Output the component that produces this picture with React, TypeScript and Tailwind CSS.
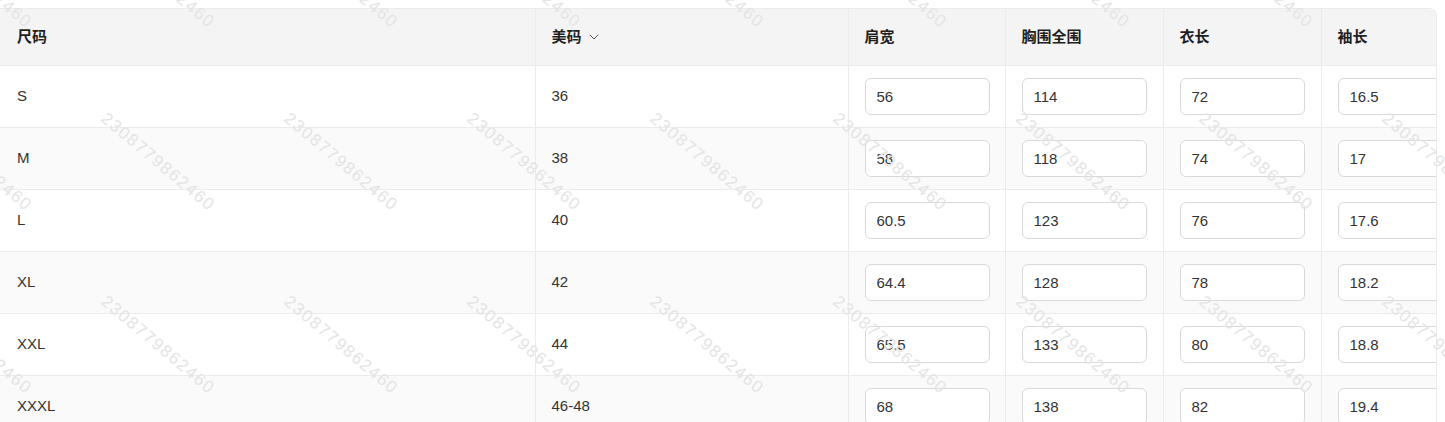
import { ChevronDown } from "lucide-react";

interface SizeRow {
  size: string;
  us: string;
  shoulder: string;
  chest: string;
  length: string;
  sleeve: string;
}

const rows: SizeRow[] = [
  { size: "S", us: "36", shoulder: "56", chest: "114", length: "72", sleeve: "16.5" },
  { size: "M", us: "38", shoulder: "58", chest: "118", length: "74", sleeve: "17" },
  { size: "L", us: "40", shoulder: "60.5", chest: "123", length: "76", sleeve: "17.6" },
  { size: "XL", us: "42", shoulder: "64.4", chest: "128", length: "78", sleeve: "18.2" },
  { size: "XXL", us: "44", shoulder: "65.5", chest: "133", length: "80", sleeve: "18.8" },
  { size: "XXXL", us: "46-48", shoulder: "68", chest: "138", length: "82", sleeve: "19.4" },
];

const WATERMARK = "2308779862460";

function Watermarks() {
  // 水印平铺
  const marks: { x: number; y: number }[] = [];
  for (let j = 0; j < 3; j++) {
    for (let i = 0; i < 9; i++) {
      marks.push({ x: -25 + 183 * i, y: -21 + 183 * j });
    }
  }
  return (
    <div className="pointer-events-none absolute inset-0 z-10 overflow-hidden">
      {marks.map((m, idx) => (
        <span
          key={idx}
          className="absolute -translate-x-1/2 -translate-y-1/2 rotate-[40deg] whitespace-nowrap text-[17px] tracking-[1.5px] text-[#e4e4e4]"
          style={{ left: m.x, top: m.y }}
        >
          {WATERMARK}
        </span>
      ))}
    </div>
  );
}

function ValueInput({ value }: { value: string }) {
  return (
    <input
      readOnly
      value={value}
      className="h-[37px] w-[125px] rounded-md border border-[#d9d9d9] bg-white pl-[11px] text-[15px] text-[#333] outline-none"
    />
  );
}

export default function App() {
  return (
    <div className="relative h-[422px] w-[1445px] overflow-hidden bg-white font-['Liberation_Sans','Noto_Sans_CJK_SC',sans-serif]">
      <div className="mt-2 mr-2 overflow-hidden rounded-tr-lg border-t border-r border-[#ebebeb]">
        <table className="w-[1479px] table-fixed border-collapse text-left text-[15px] text-[#333]">
          <colgroup>
            <col className="w-[535px]" />
            <col className="w-[313px]" />
            <col className="w-[157px]" />
            <col className="w-[158px]" />
            <col className="w-[158px]" />
            <col className="w-[158px]" />
          </colgroup>
          <thead>
            <tr className="h-[56px] bg-[#f4f4f4] text-[#1f1f1f]">
              <th className="border-b border-[#ebebeb] pl-[17px] font-bold">尺码</th>
              <th className="border-b border-l border-[#ebebeb] pl-4 font-bold">
                <span className="flex items-center gap-1">
                  美码
                  <ChevronDown size={16} strokeWidth={1.5} className="text-[#555]" />
                </span>
              </th>
              <th className="border-b border-l border-[#ebebeb] pl-4 font-bold">肩宽</th>
              <th className="border-b border-l border-[#ebebeb] pl-4 font-bold">胸围全围</th>
              <th className="border-b border-l border-[#ebebeb] pl-4 font-bold">衣长</th>
              <th className="border-b border-l border-[#ebebeb] pl-4 font-bold">袖长</th>
            </tr>
          </thead>
          <tbody>
            {rows.map((row, idx) => (
              <tr key={row.size} className={idx % 2 === 0 ? "h-[62px] bg-white" : "h-[62px] bg-[#fafafa]"}>
                <td className="border-b border-[#ebebeb] pl-[17px]">{row.size}</td>
                <td className="border-b border-l border-[#ebebeb] pl-4">{row.us}</td>
                <td className="border-b border-l border-[#ebebeb] pl-4">
                  <ValueInput value={row.shoulder} />
                </td>
                <td className="border-b border-l border-[#ebebeb] pl-4">
                  <ValueInput value={row.chest} />
                </td>
                <td className="border-b border-l border-[#ebebeb] pl-4">
                  <ValueInput value={row.length} />
                </td>
                <td className="border-b border-l border-[#ebebeb] pl-4">
                  <ValueInput value={row.sleeve} />
                </td>
              </tr>
            ))}
          </tbody>
        </table>
      </div>
      <Watermarks />
    </div>
  );
}
